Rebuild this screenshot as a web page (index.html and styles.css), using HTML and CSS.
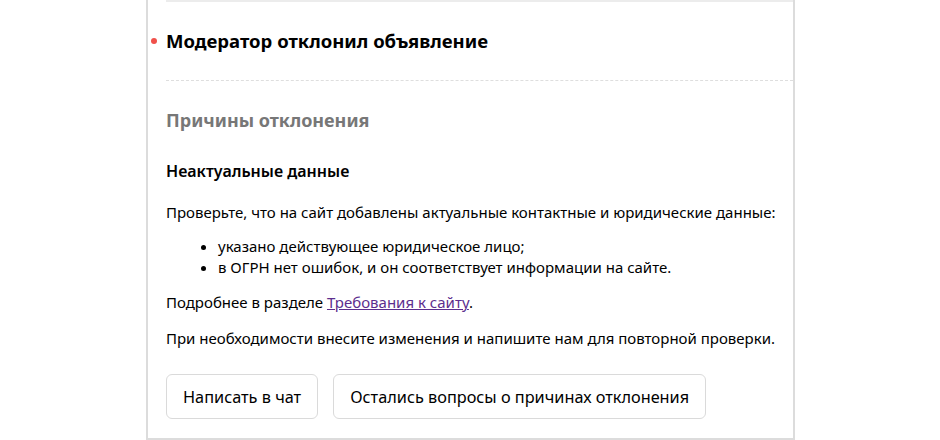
FILE: index.html
```html
<!DOCTYPE html>
<html lang="ru">
<head>
    <meta charset="UTF-8">
    <title>Модерация</title>
    <link rel="stylesheet" href="styles.css">
</head>
<body>
    <div class="card">
        <div class="status">
            <span class="dot"></span>
            <h2 class="status-title">Модератор отклонил объявление</h2>
        </div>
        <div class="reasons">
            <h3 class="reasons-title">Причины отклонения</h3>
            <h4 class="reason-name">Неактуальные данные</h4>
            <p class="first">Проверьте, что на сайт добавлены актуальные контактные и юридические данные:</p>
            <ul class="list">
                <li>указано действующее юридическое лицо;</li>
                <li>в ОГРН нет ошибок, и он соответствует информации на сайте.</li>
            </ul>
            <p>Подробнее в разделе <a href="#">Требования к сайту</a>.</p>
            <p>При необходимости внесите изменения и напишите нам для повторной проверки.</p>
            <div class="actions">
                <button class="btn">Написать в чат</button>
                <button class="btn">Остались вопросы о причинах отклонения</button>
            </div>
        </div>
    </div>
</body>
</html>
```
FILE: styles.css
```css
* {
    padding: 0;
    margin: 0;
    box-sizing: border-box;
}
body {
    background-color: #fff;
    font-family: "Noto Sans", "Open Sans", sans-serif;
    color: #000;
}
.card {
    width: 649px;
    height: 440px;
    margin-left: 146px;
    border: 2px solid #dcdcdc;
    border-top: none;
    padding-left: 18px;
}
.status {
    position: relative;
    border-top: 2px solid #ececec;
    border-bottom: 1px dashed #dedede;
    height: 81px;
    padding-bottom: 2px;
    display: flex;
    align-items: center;
}
.dot {
    position: absolute;
    left: -15px;
    top: 36px;
    width: 6px;
    height: 6px;
    border-radius: 50%;
    background: #f0504a;
}
.status-title {
    font-size: 18.5px;
    font-weight: 700;
}
.reasons {
    padding-top: 27px;
}
.reasons-title {
    font-size: 18px;
    font-weight: 700;
    color: #777;
    line-height: 24px;
}
.reason-name {
    font-size: 16px;
    font-weight: 600;
    margin-top: 29px;
    line-height: 20px;
}
.reasons p {
    font-size: 15px;
    line-height: 20px;
    margin-top: 16px;
}
.reasons p.first {
    margin-top: 21px;
}
.list {
    font-size: 15px;
    line-height: 21px;
    margin-top: 14px;
    padding-left: 52px;
    margin-bottom: -2px;
}
.reasons a {
    color: #5c2e8e;
}
.actions {
    display: flex;
    gap: 15px;
    margin-top: 26px;
}
.btn {
    font-family: inherit;
    font-size: 16.3px;
    height: 45px;
    padding: 0 16px;
    background: #fff;
    border: 1px solid #dadada;
    border-radius: 6px;
    color: #000;
}
```
